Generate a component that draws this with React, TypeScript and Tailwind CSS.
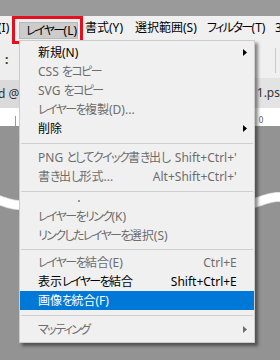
import React from "react";
import clsx from "clsx";

type Item =
  | { kind: "row"; label: string; shortcut?: string; arrow?: boolean; disabled?: boolean; active?: boolean }
  | { kind: "sep"; h?: string }
  | { kind: "cut" };

const items: Item[] = [
  { kind: "row", label: "新規(N)", arrow: true },
  { kind: "row", label: "CSS をコピー", disabled: true },
  { kind: "row", label: "SVG をコピー", disabled: true },
  { kind: "row", label: "レイヤーを複製(D)...", disabled: true },
  { kind: "row", label: "削除", arrow: true },
  { kind: "sep" },
  { kind: "row", label: "PNG としてクイック書き出し", shortcut: "Shift+Ctrl+'", disabled: true },
  { kind: "row", label: "書き出し形式...", shortcut: "Alt+Shift+Ctrl+'", disabled: true },
  { kind: "sep" },
  { kind: "cut" },
  { kind: "row", label: "レイヤーをリンク(K)", disabled: true },
  { kind: "row", label: "リンクしたレイヤーを選択(S)", disabled: true },
  { kind: "sep", h: "h-[8px]" },
  { kind: "row", label: "レイヤーを結合(E)", shortcut: "Ctrl+E", disabled: true },
  { kind: "row", label: "表示レイヤーを結合", shortcut: "Shift+Ctrl+E" },
  { kind: "row", label: "画像を統合(F)", active: true },
  { kind: "sep" },
  { kind: "row", label: "マッティング", arrow: true, disabled: true },
];

// torn-paper wave across the screenshot
const wave = (() => {
  const pts: string[] = [];
  for (let x = -4; x <= 284; x += 2) {
    const y = 201 - 4 * Math.cos((2 * Math.PI * (x - 57)) / 74);
    pts.push(`${x},${y.toFixed(1)}`);
  }
  return "M" + pts.join(" L");
})();

// Windows UI font has narrow kana; tighten kana runs so widths line up
function Jp({ text }: { text: string }) {
  const parts = text.split(/([\u3040-\u30ff]+)/);
  return (
    <>
      {parts.map((p, i) =>
        /[\u3040-\u30ff]/.test(p) ? (
          <span key={i} className="tracking-[-1.6px]">
            {p}
          </span>
        ) : (
          <span key={i}>{p}</span>
        )
      )}
    </>
  );
}

const Arrow = ({ gray }: { gray?: boolean }) => (
  <svg width="4" height="7" viewBox="0 0 4 7">
    <polygon points="0,0 4,3.5 0,7" fill={gray ? "#6d6d6d" : "#000"} />
  </svg>
);

function MenuRow({ label, shortcut, arrow, disabled, active }: Extract<Item, { kind: "row" }>) {
  return (
    <div
      className={clsx(
        "flex h-[19px] items-center pl-[18px] pr-[7px] text-[12px] leading-none",
        active ? "bg-[#0078d7] text-white" : disabled ? "text-[#6d6d6d]" : "text-black"
      )}
    >
      <span className="flex-1 whitespace-nowrap">
        <Jp text={label} />
      </span>
      {shortcut && <span className="whitespace-nowrap">{shortcut}</span>}
      <span className="flex w-[10px] justify-end">{arrow && <Arrow gray={disabled} />}</span>
    </div>
  );
}

export default function App() {
  return (
    <div className="relative h-[360px] w-[280px] overflow-hidden bg-[#939393] font-['Noto_Sans','Noto_Sans_CJK_JP',sans-serif] [font-feature-settings:'palt']">
      {/* window title strip */}
      <div className="h-[16px] bg-[#9a9a9a]" />

      {/* menu bar */}
      <div className="flex h-[24px] whitespace-nowrap bg-[#f0f0f0] text-[12px] text-black">
        <div className="flex w-[19px] shrink-0 items-center overflow-hidden">
          <span className="-ml-[2px]">(I)</span>
        </div>
        <div className="mb-[1px] mt-[6px] flex w-[59px] shrink-0 items-center border border-[#b9b9b9] bg-[#cccccc] pl-[6px]">
          <Jp text="レイヤー(L)" />
        </div>
        <div className="flex w-[50px] shrink-0 items-center pl-[7px]">書式(Y)</div>
        <div className="flex w-[72px] shrink-0 items-center pl-[7px]">選択範囲(S)</div>
        <div className="flex w-[68px] shrink-0 items-center pl-[7px]">
          <Jp text="フィルター(T)" />
        </div>
        <div className="flex items-center pl-[7px]">3</div>
      </div>

      <div className="flex">
        {/* document behind, left edge */}
        <div className="flex w-[19px] flex-col">
          <div className="flex h-[40px] items-center bg-[#eeeeee] pl-[5px] text-[12px] font-bold text-[#333]">:</div>
          <div className="flex h-[28px] items-center overflow-hidden bg-[#dadada] text-[12px] text-[#333]">
            <span className="-ml-[2px] whitespace-nowrap">d @</span>
          </div>
          <div className="relative h-[18px] bg-white">
            <div className="absolute bottom-0 left-[15px] h-[10px] w-px bg-[#999]" />
          </div>
        </div>

        {/* menu */}
        <div className="relative z-10 flex w-[241px] flex-col self-start border border-[#cccccc] bg-[#f0f0f0] pb-[3px] pt-[2px] shadow-[3px_3px_3px_rgba(0,0,0,0.45)]">
          {items.map((it, i) => {
            if (it.kind === "sep")
              return (
                <div key={i} className={clsx("flex items-center pl-px pr-px", it.h ?? "h-[10px]")}>
                  <div className="h-px flex-1 bg-[#cfcfcf]" />
                </div>
              );
            if (it.kind === "cut")
              return (
                <div key={i} className="h-[11px] pl-[58px] pt-[4px]">
                  <div className="h-[2px] w-[2px] rounded-full bg-[#777]" />
                </div>
              );
            return <MenuRow key={i} {...it} />;
          })}
        </div>

        {/* document behind, right edge */}
        <div className="flex flex-1 flex-col">
          <div className="flex h-[38px] justify-end bg-[#f0f0f0] pr-[4px] pt-[8px]">
            <div className="h-[25px] w-px bg-[#c8c8c8]" />
          </div>
          <div className="flex h-[30px] items-center overflow-hidden bg-[#e3e3e3] pl-[2px] text-[12px] text-[#333]">
            <span className="whitespace-nowrap">1.ps</span>
          </div>
          <div className="flex h-[18px] items-end overflow-hidden bg-white pl-[4px] text-[8px] leading-[12px] text-[#555]">
            0
          </div>
        </div>
      </div>

      {/* torn wave */}
      <svg className="pointer-events-none absolute inset-0" width="280" height="360" viewBox="0 0 280 360">
        <path d={wave} fill="none" stroke="#d6d6d6" strokeWidth="10" />
        <path d={wave} fill="none" stroke="#ffffff" strokeWidth="8.5" />
      </svg>

      {/* red highlight boxes */}
      <div className="pointer-events-none absolute left-[12px] top-[16px] h-[28px] w-[71px] border-[3px] border-[#e60f1e]" />
      <div className="pointer-events-none absolute left-[20px] top-[286px] h-[35px] w-[101px] border-[3px] border-[#e60f1e]" />
    </div>
  );
}
